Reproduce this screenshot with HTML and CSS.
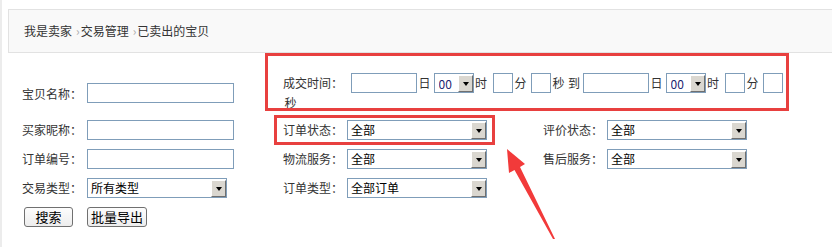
FILE: index.html
```html
<!DOCTYPE html>
<html lang="zh-CN">
<head>
<meta charset="UTF-8">
<meta name="viewport" content="width=device-width, initial-scale=1.0">
<title>已卖出的宝贝</title>

<link rel="stylesheet" href="styles.css">
</head>

<body>

<div class="page">
  <div class="crumb">我是卖家<span class="sep">›</span>交易管理<span class="sep">›</span>已卖出的宝贝</div>

  <!-- SEARCH FORM -->
  <form class="search">
    <label class="lbl">宝贝名称：</label>
    <input class="txt" type="text">
    <div class="time"><span class="time-lbl">成交时间：</span><input class="day" type="text"><span class="u u-day">日</span><span class="sel sel-hour"><select><option>00</option></select></span><span class="u u-hour">时</span><input class="mini" type="text"><span class="u u-min">分</span><input class="mini" type="text"><span class="u u-sec">秒</span><span class="u u-to">到</span><input class="day" type="text"><span class="u u-day">日</span><span class="sel sel-hour"><select><option>00</option></select></span><span class="u u-hour">时</span><input class="mini" type="text"><span class="u u-min">分</span><input class="mini" type="text"><span class="u">秒</span></div>

    <label class="lbl">买家昵称：</label>
    <input class="txt" type="text">
    <label class="lbl">订单状态：</label>
    <span class="sel"><select><option>全部</option></select></span>
    <label class="lbl">评价状态：</label>
    <span class="sel"><select><option>全部</option></select></span>

    <label class="lbl">订单编号：</label>
    <input class="txt" type="text">
    <label class="lbl">物流服务：</label>
    <span class="sel"><select><option>全部</option></select></span>
    <label class="lbl">售后服务：</label>
    <span class="sel"><select><option>全部</option></select></span>

    <label class="lbl">交易类型：</label>
    <span class="sel"><select><option>所有类型</option></select></span>
    <label class="lbl">订单类型：</label>
    <span class="sel"><select><option>全部订单</option></select></span>

    <button type="button" class="btn btn-search">搜索</button>
    <button type="button" class="btn btn-export">批量导出</button>
  </form>
</div>

<!-- annotation marks -->
<svg class="marks" width="832" height="247" viewBox="0 0 832 247">
  <rect x="266.5" y="54.5" width="521" height="55" fill="none" stroke="#e8403f" stroke-width="3"/>
  <rect x="275.5" y="116.5" width="218" height="27" fill="none" stroke="#e8403f" stroke-width="3"/>
  <polygon points="507,149 525,164 520,167 555,239 553,239 514.5,170 509,173" fill="#f23a3a"/>
</svg>

</body>
</html>
```

FILE: styles.css
```css
body {
  margin: 0;
  position: relative;
  font-family: "Noto Sans CJK SC", "Liberation Sans", sans-serif;
  font-size: 12px;
  color: #333;
  background: #fff;
}

.page {
  border-left: 2px solid #ececec;
  min-height: 247px;
  box-sizing: border-box;
  padding-top: 9px;
}

/* BREADCRUMB */
.crumb {
  margin-left: 6px;
  height: 42px;
  line-height: 42px;
  padding-left: 15px;
  background: #f9f9f9;
  border: 1px solid #e2e2e2;
  border-right: none;
}

.crumb .sep {
  color: #aaa;
  margin: 0 1px 0 4px;
}

/* SEARCH GRID */
.search {
  display: grid;
  grid-template-columns: 65px 196px 64px 196px 64px 200px;
  grid-template-rows: 44px 29px 29px 29px 29px;
  align-items: center;
  margin: 18px 0 0 20px;
}

.lbl {
  white-space: nowrap;
}

input,
select,
button {
  font-family: inherit;
  font-size: 12px;
  box-sizing: border-box;
  margin: 0;
}

input {
  height: 20px;
  border: 1px solid #7f9db9;
  padding: 0 3px;
  background: #fff;
  outline: none;
}

.txt {
  width: 147px;
}

/* SELECT */
.sel {
  position: relative;
  display: inline-block;
  width: 140px;
  height: 20px;
  vertical-align: top;
}

.sel select {
  display: block;
  width: 100%;
  height: 20px;
  appearance: none;
  -webkit-appearance: none;
  border: 1px solid #7f9db9;
  border-radius: 0;
  background: #fff;
  color: #000;
  padding: 0 0 0 3px;
  outline: none;
}

.sel::after {
  content: "";
  position: absolute;
  right: 1px;
  top: 2px;
  bottom: 1px;
  width: 15px;
  box-sizing: border-box;
  background: #dad7d0;
  border: 1px solid;
  border-color: #fff #6f6f6f #6f6f6f #fff;
}

.sel::before {
  content: "";
  position: absolute;
  z-index: 1;
  right: 5px;
  top: 9px;
  border-left: 3.5px solid transparent;
  border-right: 3.5px solid transparent;
  border-top: 4px solid #000;
}

/* TIME RANGE */
.time {
  grid-column: 3 / 7;
  align-self: start;
  max-width: 504px;
  padding-top: 2px;
  line-height: 20px;
}

.time input,
.time .sel {
  vertical-align: top;
}

.time-lbl {
  display: inline-block;
  width: 68px;
}

.day {
  width: 66px;
}

.mini {
  width: 20px;
}

.sel-hour {
  width: 40px;
}

.sel-hour select {
  padding-left: 4px;
  color: #1c2470;
}

.u {
  margin-left: 1.5px;
}

.u-day { margin-right: 3px; }
.u-hour { margin-right: 6px; }
.u-min { margin-right: 4.5px; }
.u-sec { margin-right: 3.5px; }
.u-to { margin-left: 0; margin-right: 3px; }

/* BUTTONS */
.btn {
  height: 20px;
  padding: 0;
  font-size: 13px;
  line-height: 18px;
  color: #000;
  background: linear-gradient(#fdfdfd, #ededed);
  border: 1px solid #707070;
  border-radius: 3px;
  cursor: pointer;
}

.btn-search {
  grid-column: 1;
  width: 49px;
  margin-left: 2px;
}

.btn-export {
  grid-column: 2;
  width: 60px;
}

/* ANNOTATIONS */
.marks {
  position: absolute;
  top: 0;
  left: 0;
  pointer-events: none;
}
```
